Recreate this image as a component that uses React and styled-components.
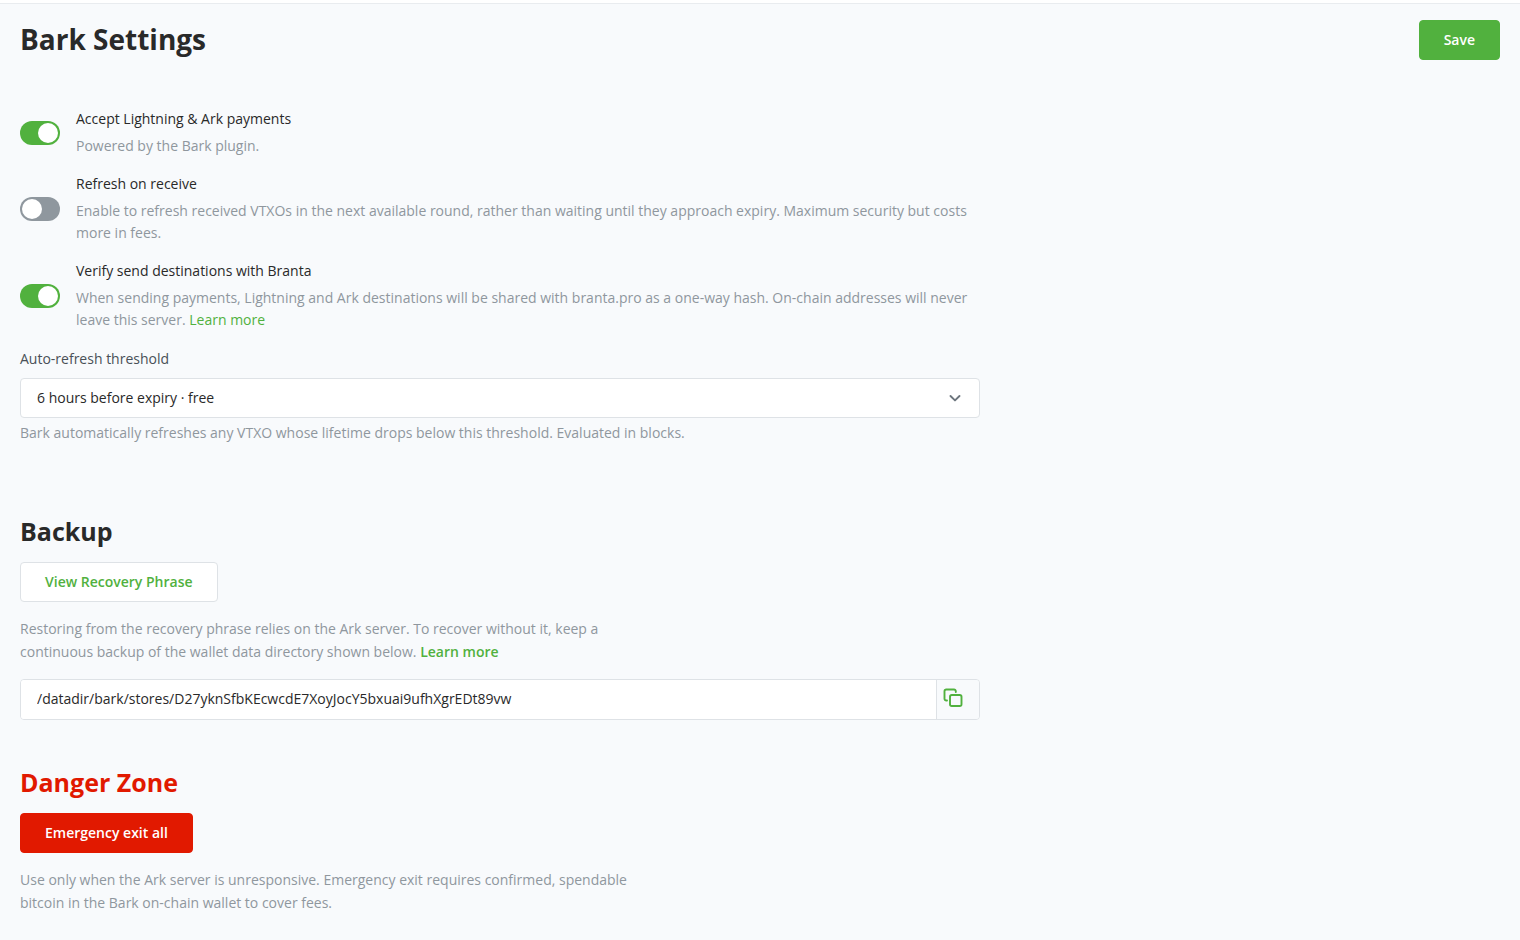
import React, { useState } from "react";
import styled, { createGlobalStyle, css } from "styled-components";

const color = {
  page: "#f8fafc",
  white: "#ffffff",
  border: "#dee2e6",
  line: "#e9ecef",
  text: "#292929",
  label: "#495057",
  muted: "#8f979e",
  green: "#51b13e",
  red: "#e11900",
};

const GlobalStyle = createGlobalStyle`
  *, *::before, *::after { box-sizing: border-box; }
  body {
    margin: 0;
    background: ${color.page};
    color: ${color.text};
    font: 400 14px/22px "Open Sans", "Noto Sans", sans-serif;
  }
  h1, h2, p { margin: 0; }
  button, input, select { font: inherit; }
`;

const TopBar = styled.div`
  height: 4px;
  background: ${color.white};
  border-bottom: 1px solid ${color.line};
`;

const Page = styled.main`
  padding: 16px 20px 24px;
`;

const Header = styled.header`
  display: flex;
  align-items: flex-start;
  justify-content: space-between;
  margin-bottom: 48px;
`;

const Title = styled.h1`
  font-size: 28px;
  line-height: 38px;
  font-weight: 700;
`;

const Heading = styled.h2`
  margin-bottom: 16px;
  font-size: 25px;
  line-height: 30px;
  font-weight: 700;
  color: ${(p) => (p.$danger ? color.red : color.text)};
`;

const variants = {
  primary: css`
    background: ${color.green};
    border-color: ${color.green};
    color: ${color.white};
  `,
  secondary: css`
    background: ${color.white};
    border-color: ${color.border};
    color: ${color.green};
  `,
  danger: css`
    background: ${color.red};
    border-color: ${color.red};
    color: ${color.white};
  `,
};

const Button = styled.button`
  height: 40px;
  padding: 0 24px;
  border: 1px solid;
  border-radius: 4px;
  font-weight: 600;
  cursor: pointer;
  ${(p) => variants[p.$variant]}
`;

const Form = styled.form`
  display: flex;
  flex-direction: column;
  gap: 16px;
  max-width: 960px;
`;

const ToggleRow = styled.div`
  display: flex;
  align-items: center;
  gap: 16px;
`;

const Switch = styled.input`
  appearance: none;
  flex: none;
  display: flex;
  align-items: center;
  width: 40px;
  height: 24px;
  margin: 0;
  padding: 0 2px;
  border-radius: 12px;
  background: ${color.muted};
  cursor: pointer;

  &::before {
    content: "";
    width: 20px;
    height: 20px;
    border-radius: 50%;
    background: ${color.white};
  }

  &:checked {
    justify-content: flex-end;
    background: ${color.green};
  }
`;

const ToggleText = styled.div`
  display: flex;
  flex-direction: column;
  gap: 5px;
`;

const Help = styled.p`
  color: ${color.muted};
`;

const Link = styled.a`
  color: ${color.green};
  font-weight: ${(p) => (p.$strong ? 600 : 400)};
  text-decoration: none;
`;

const Field = styled.div`
  display: flex;
  flex-direction: column;
`;

const FieldLabel = styled.label`
  margin-bottom: 7px;
  line-height: 24px;
  color: ${color.label};
`;

const SelectWrap = styled.div`
  display: grid;
  align-items: center;
  margin-bottom: 4px;

  > * {
    grid-area: 1 / 1;
  }

  > svg {
    justify-self: end;
    margin-right: 18px;
    pointer-events: none;
  }
`;

const Select = styled.select`
  appearance: none;
  width: 100%;
  height: 40px;
  padding: 0 40px 0 16px;
  border: 1px solid ${color.border};
  border-radius: 4px;
  background: ${color.white};
  color: ${color.text};
`;

const Section = styled.section`
  margin-top: ${(p) => (p.$spacious ? 72 : 47)}px;
`;

const Note = styled.p`
  max-width: 620px;
  margin-top: 15px;
  line-height: 23px;
  color: ${color.muted};
`;

const PathGroup = styled.div`
  display: flex;
  max-width: 960px;
  height: 41px;
  margin-top: 16px;
  border: 1px solid ${color.border};
  border-radius: 4px;
  overflow: hidden;
`;

const PathInput = styled.input`
  flex: 1;
  min-width: 0;
  padding: 0 16px 2px;
  border: 0;
  background: ${color.white};
  color: ${color.text};
`;

const CopyButton = styled.button`
  display: flex;
  align-items: center;
  width: 43px;
  padding: 0 0 5px 4px;
  border: 0;
  border-left: 1px solid ${color.border};
  background: ${color.page};
  color: ${color.green};
  cursor: pointer;
`;

function Toggle({ id, label, defaultChecked, children }) {
  const [on, setOn] = useState(defaultChecked);
  return (
    <ToggleRow>
      <Switch
        type="checkbox"
        id={id}
        checked={on}
        aria-describedby={`${id}-help`}
        onChange={(e) => setOn(e.target.checked)}
      />
      <ToggleText>
        <label htmlFor={id}>{label}</label>
        <Help id={`${id}-help`}>{children}</Help>
      </ToggleText>
    </ToggleRow>
  );
}

function ChevronIcon() {
  return (
    <svg width="14" height="14" viewBox="0 0 14 14" fill="none" stroke="#6c757d" strokeWidth="1.9" strokeLinecap="round" strokeLinejoin="round" aria-hidden="true">
      <path d="M2.500 5 7 9.400 11.500 5" />
    </svg>
  );
}

function CopyIcon() {
  return (
    <svg width="24" height="24" viewBox="0 0 24 24" fill="none" stroke="currentColor" strokeWidth="1.9" strokeLinecap="round" strokeLinejoin="round" aria-hidden="true">
      <rect x="9" y="10" width="11.5" height="11" rx="1.8" />
      <path d="M6 15.500H5.300A1.800 1.800 0 0 1 3.500 13.700V6.300A1.800 1.800 0 0 1 5.300 4.500H13A1.800 1.800 0 0 1 14.800 6.300V7" />
    </svg>
  );
}

export default function App() {
  return (
    <>
      <GlobalStyle />
      <TopBar />
      <Page>
        <Header>
          <Title>Bark Settings</Title>
          <Button type="submit" form="settings" $variant="primary">Save</Button>
        </Header>

        <Form id="settings" onSubmit={(e) => e.preventDefault()}>
          <Toggle id="accept" label="Accept Lightning & Ark payments" defaultChecked>
            Powered by the Bark plugin.
          </Toggle>
          <Toggle id="refresh" label="Refresh on receive" defaultChecked={false}>
            Enable to refresh received VTXOs in the next available round, rather than waiting until
            they approach expiry. Maximum security but costs more in fees.
          </Toggle>
          <Toggle id="verify" label="Verify send destinations with Branta" defaultChecked>
            When sending payments, Lightning and Ark destinations will be shared with branta.pro as a
            one-way hash. On-chain addresses will never leave this server.{" "}
            <Link href="#branta">Learn more</Link>
          </Toggle>
          <Field>
            <FieldLabel htmlFor="threshold">Auto-refresh threshold</FieldLabel>
            <SelectWrap>
              <Select id="threshold">
                <option>6 hours before expiry · free</option>
              </Select>
              <ChevronIcon />
            </SelectWrap>
            <Help>
              Bark automatically refreshes any VTXO whose lifetime drops below this threshold.
              Evaluated in blocks.
            </Help>
          </Field>
        </Form>

        <Section $spacious>
          <Heading>Backup</Heading>
          <Button type="button" $variant="secondary">View Recovery Phrase</Button>
          <Note>
            Restoring from the recovery phrase relies on the Ark server. To recover without it, keep a
            continuous backup of the wallet data directory shown below.{" "}
            <Link href="#backup" $strong>Learn more</Link>
          </Note>
          <PathGroup>
            <PathInput
              type="text"
              readOnly
              aria-label="Wallet data directory"
              value="/datadir/bark/stores/D27yknSfbKEcwcdE7XoyJocY5bxuai9ufhXgrEDt89vw"
            />
            <CopyButton type="button" aria-label="Copy path">
              <CopyIcon />
            </CopyButton>
          </PathGroup>
        </Section>

        <Section>
          <Heading $danger>Danger Zone</Heading>
          <Button type="button" $variant="danger">Emergency exit all</Button>
          <Note>
            Use only when the Ark server is unresponsive. Emergency exit requires confirmed, spendable
            bitcoin in the Bark on-chain wallet to cover fees.
          </Note>
        </Section>
      </Page>
    </>
  );
}
